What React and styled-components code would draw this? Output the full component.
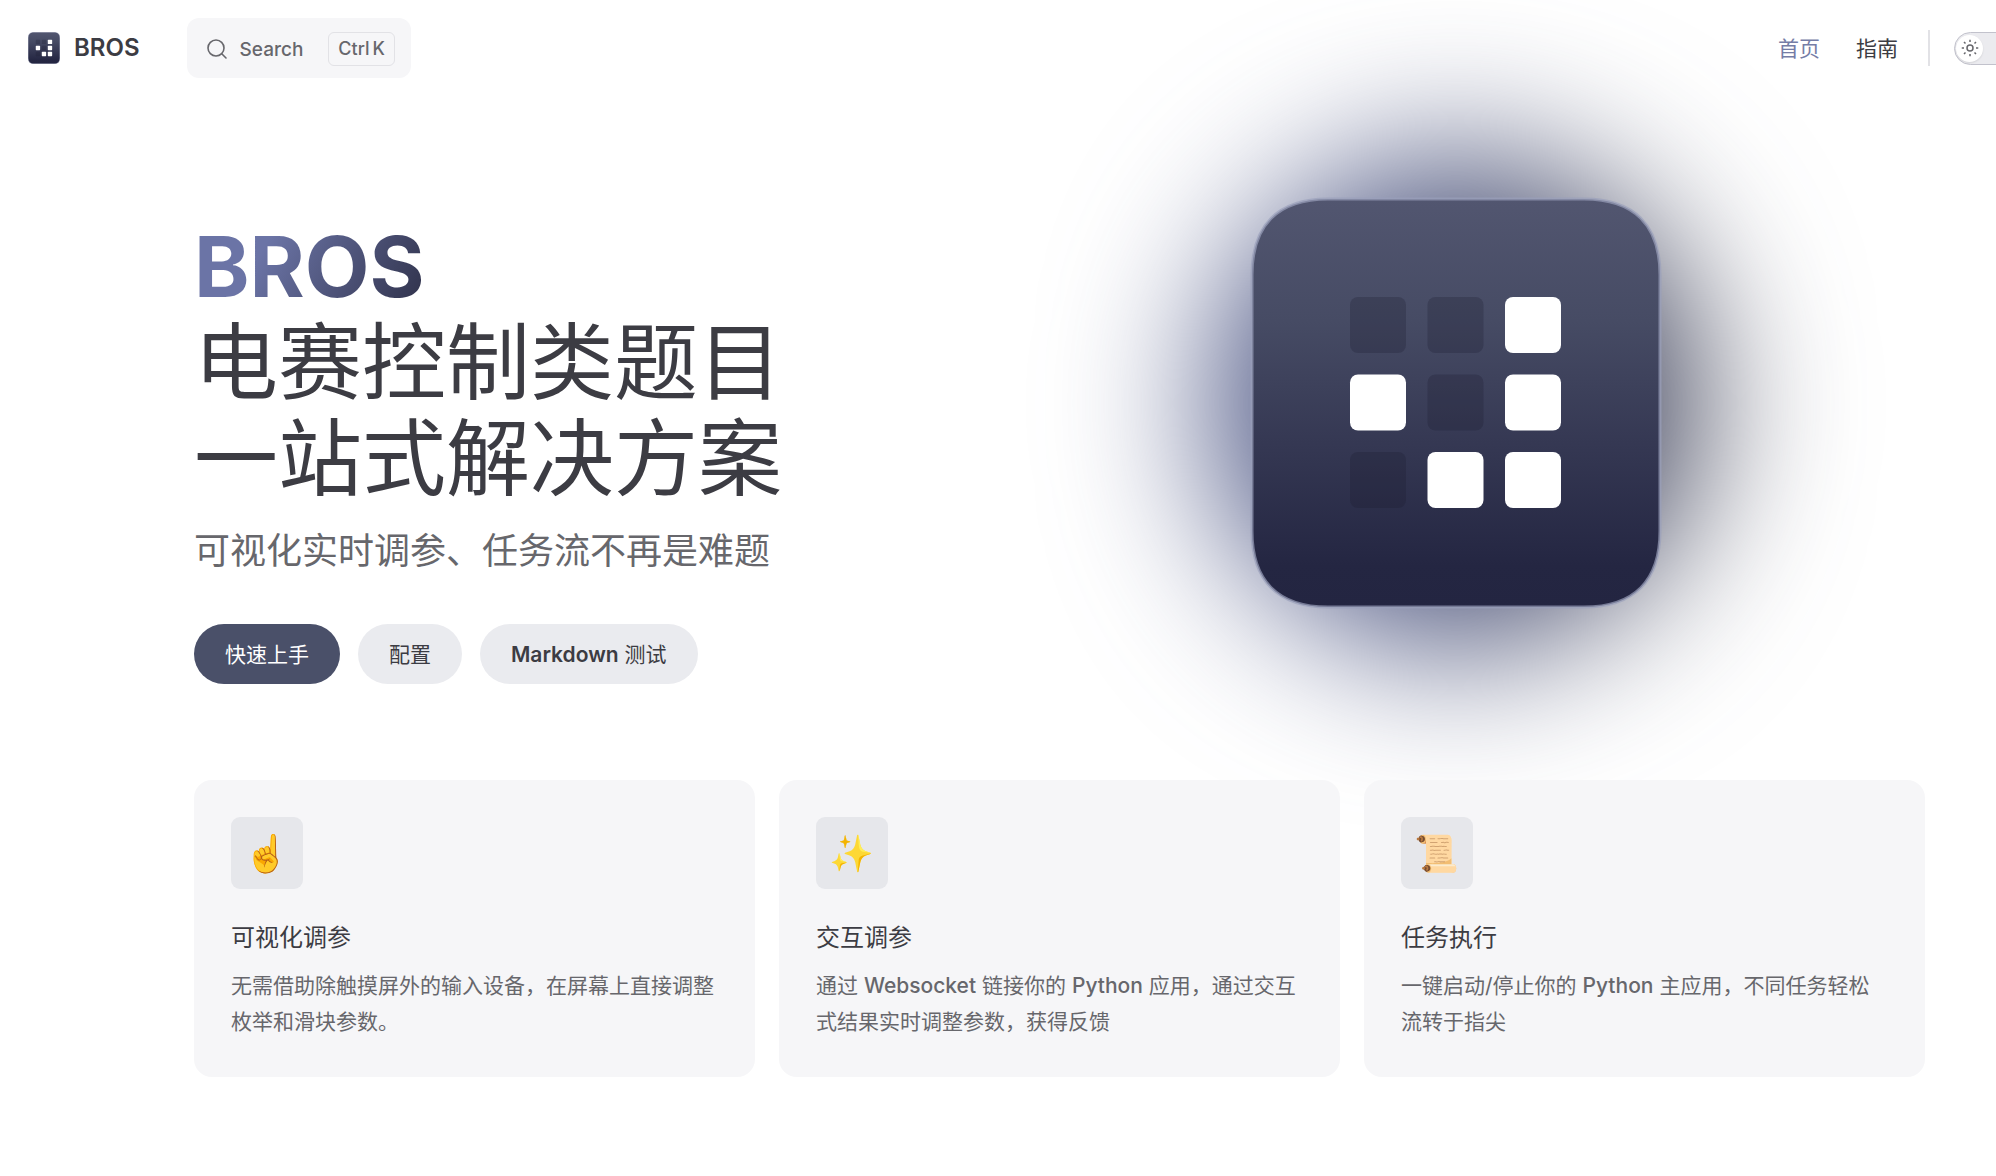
import React from "react";
import styled, { createGlobalStyle, css } from "styled-components";

const features = [
  {
    icon: "☝️",
    title: "可视化调参",
    details: "无需借助除触摸屏外的输入设备，在屏幕上直接调整枚举和滑块参数。"
  },
  {
    icon: "✨",
    title: "交互调参",
    details: (
      <>
        通过 <b>Websocket</b> 链接你的 <b>Python</b> 应用，通过交互式结果实时调整参数，获得反馈
      </>
    )
  },
  {
    icon: "📜",
    title: "任务执行",
    details: (
      <>
        一键启动/停止你的 <b>Python</b> 主应用，不同任务轻松流转于指尖
      </>
    )
  }
];

const cells = [0, 0, 1, 1, 0, 1, 0, 1, 1];

function Logo({ id, size, stroke }) {
  return (
    <svg width={size} height={size} viewBox="0 0 412 412" aria-hidden="true">
      <defs>
        <linearGradient id={id} x1="0" y1="0" x2="0" y2="1">
          <stop offset="0" stopColor="#525670" />
          <stop offset="0.3" stopColor="#464b64" />
          <stop offset="0.6" stopColor="#353853" />
          <stop offset="0.9" stopColor="#242642" />
          <stop offset="1" stopColor="#232541" />
        </linearGradient>
      </defs>
      <path
        d="M78 2H334C384 2 410 28 410 78V334C410 384 384 410 334 410H78C28 410 2 384 2 334V78C2 28 28 2 78 2Z"
        fill={`url(#${id})`}
        stroke="#9a9fba"
        strokeOpacity="0.7"
        strokeWidth={stroke}
      />
      {cells.map((on, i) => (
        <rect
          key={i}
          x={100 + (i % 3) * 77.5}
          y={100 + Math.floor(i / 3) * 77.5}
          width="56"
          height="56"
          rx="8"
          fill={on ? "#fff" : "#1c1a30"}
          fillOpacity={on ? 1 : 0.26}
        />
      ))}
    </svg>
  );
}

export default function App() {
  return (
    <Page>
      <GlobalStyle />
      <Header>
        <Brand href="#">
          <Logo id="brand" size={32} stroke={6} />
          BROS
        </Brand>
        <SearchButton type="button">
          <svg width="22" height="22" viewBox="0 0 22 22" fill="none" stroke="currentColor" strokeWidth="1.6">
            <circle cx="10" cy="10" r="8" />
            <path d="M16 16l4 4" strokeLinecap="round" />
          </svg>
          Search
          <Keys>
            <span>Ctrl</span>
            <span>K</span>
          </Keys>
        </SearchButton>
        <Nav>
          <NavLink href="#" $active>
            首页
          </NavLink>
          <NavLink href="#guide">指南</NavLink>
        </Nav>
        <Divider />
        <ThemeSwitch type="button" role="switch" aria-checked="false" aria-label="Toggle dark mode">
          <Thumb>
            <svg width="18" height="18" viewBox="0 0 24 24" fill="none" stroke="currentColor" strokeWidth="2">
              <circle cx="12" cy="12" r="4" />
              <path d="M12 1v3M12 20v3M1 12h3M20 12h3M4 4l2 2M18 18l2 2M4 20l2-2M18 6l2-2" />
            </svg>
          </Thumb>
        </ThemeSwitch>
      </Header>
      <Main>
        <Hero>
          <Intro>
            <Title>
              <Name>BROS</Name>
              <span>电赛控制类题目</span>
              <span>一站式解决方案</span>
            </Title>
            <Tagline>可视化实时调参、任务流不再是难题</Tagline>
            <Actions>
              <Action href="#start" $brand>
                快速上手
              </Action>
              <Action href="#config">配置</Action>
              <Action href="#markdown">
                <b>Markdown</b> 测试
              </Action>
            </Actions>
          </Intro>
          <Picture>
            <Glow />
            <Logo id="hero" size={412} stroke={3} />
          </Picture>
        </Hero>
        <Features>
          {features.map(({ icon, title, details }) => (
            <Feature key={title}>
              <FeatureIcon>{icon}</FeatureIcon>
              <FeatureTitle>{title}</FeatureTitle>
              <FeatureDetails>{details}</FeatureDetails>
            </Feature>
          ))}
        </Features>
      </Main>
    </Page>
  );
}

const GlobalStyle = createGlobalStyle`
  * {
    box-sizing: border-box;
  }

  body {
    margin: 0;
    background: #fff;
    color: #3c3c43;
    font-family: Inter, "Noto Sans CJK SC", "Noto Color Emoji", sans-serif;
    font-size: 21px;
    line-height: 36px;
    -webkit-font-smoothing: antialiased;
  }

  a {
    color: inherit;
    text-decoration: none;
  }
`;

const Page = styled.div`
  overflow: hidden;
`;

const Header = styled.header`
  display: flex;
  align-items: center;
  height: 96px;
  padding-left: 28px;
  position: relative;
  z-index: 1;
`;

const Brand = styled.a`
  display: flex;
  align-items: center;
  gap: 14px;
  font-size: 24px;
  font-weight: 600;
`;

const SearchButton = styled.button`
  display: flex;
  align-items: center;
  gap: 12px;
  height: 60px;
  margin-left: 47px;
  padding: 2px 16px 0 19px;
  border: 0;
  border-radius: 12px;
  background: #f6f6f8;
  color: #67676c;
  font: 500 19px Inter, sans-serif;
`;

const Keys = styled.kbd`
  display: flex;
  gap: 3px;
  margin-left: 13px;
  padding: 0 9px;
  border: 1px solid #e2e2e6;
  border-radius: 6px;
  font: 500 18px/32px Inter, sans-serif;
`;

const Nav = styled.nav`
  display: flex;
  gap: 36px;
  margin-left: auto;
  padding-top: 2px;
`;

const NavLink = styled.a`
  color: ${props => (props.$active ? "#757da6" : "#3c3c43")};
`;

const Divider = styled.span`
  width: 2px;
  height: 36px;
  margin: 0 24px 0 30px;
  background: #e2e2e6;
`;

const ThemeSwitch = styled.button`
  flex: none;
  width: 60px;
  height: 33px;
  margin-right: -18px;
  padding: 2px 1px;
  border: 1px solid #c2c2cc;
  border-radius: 17px;
  background: #ebebef;
`;

const Thumb = styled.span`
  display: grid;
  place-items: center;
  width: 27px;
  height: 27px;
  border-radius: 50%;
  background: #fff;
  color: #67676c;
  box-shadow: 0 1px 2px rgba(0, 0, 0, 0.1);
`;

const Main = styled.main`
  padding: 120px 71px 100px 194px;
`;

const Hero = styled.section`
  display: flex;
`;

const Intro = styled.div`
  flex: 1;
  padding-top: 3px;
`;

const Title = styled.h1`
  display: flex;
  flex-direction: column;
  align-items: flex-start;
  margin: 0;
  font-size: 84px;
  font-weight: 400;
  line-height: 96px;
`;

const Name = styled.span`
  font-weight: 700;
  background: linear-gradient(120deg, #6b74a6 30%, #2e3048);
  background-clip: text;
  color: transparent;
`;

const Tagline = styled.p`
  margin: 0;
  padding-top: 17px;
  color: #67676c;
  font-size: 36px;
  line-height: 54px;
`;

const Actions = styled.div`
  display: flex;
  gap: 18px;
  padding-top: 46px;
`;

const Action = styled.a`
  padding: 2px 31px 0;
  border-radius: 30px;
  line-height: 58px;
  background: #eaebef;

  b {
    font-weight: 600;
  }

  ${props =>
    props.$brand &&
    css`
      background: #4a5069;
      color: #fff;
    `};
`;

const Picture = styled.div`
  display: flex;
  align-items: center;
  flex: none;
  width: 412px;
  height: 374px;
  margin-right: 263px;
  position: relative;
`;

const Glow = styled.div`
  position: absolute;
  inset: -53px -34px;
  border-radius: 50%;
  background: linear-gradient(-90deg, #33364c 15%, #414b7c 60%);
  filter: blur(82px);

  & + svg {
    flex: none;
    position: relative;
  }
`;

const Features = styled.section`
  display: grid;
  grid-template-columns: repeat(3, 1fr);
  gap: 24px;
  margin-top: 96px;
  position: relative;
`;

const Feature = styled.article`
  padding: 37px;
  border-radius: 18px;
  background: #f6f6f8;
`;

const FeatureIcon = styled.div`
  width: 72px;
  height: 72px;
  margin-bottom: 31px;
  border-radius: 9px;
  background: #e6e7eb;
  font-size: 36px;
  line-height: 72px;
  text-align: center;
`;

const FeatureTitle = styled.h2`
  margin: 0;
  font-size: 24px;
  font-weight: 400;
`;

const FeatureDetails = styled.p`
  margin: 0;
  padding-top: 12px;
  color: #67676c;

  b {
    font-weight: 500;
  }
`;
